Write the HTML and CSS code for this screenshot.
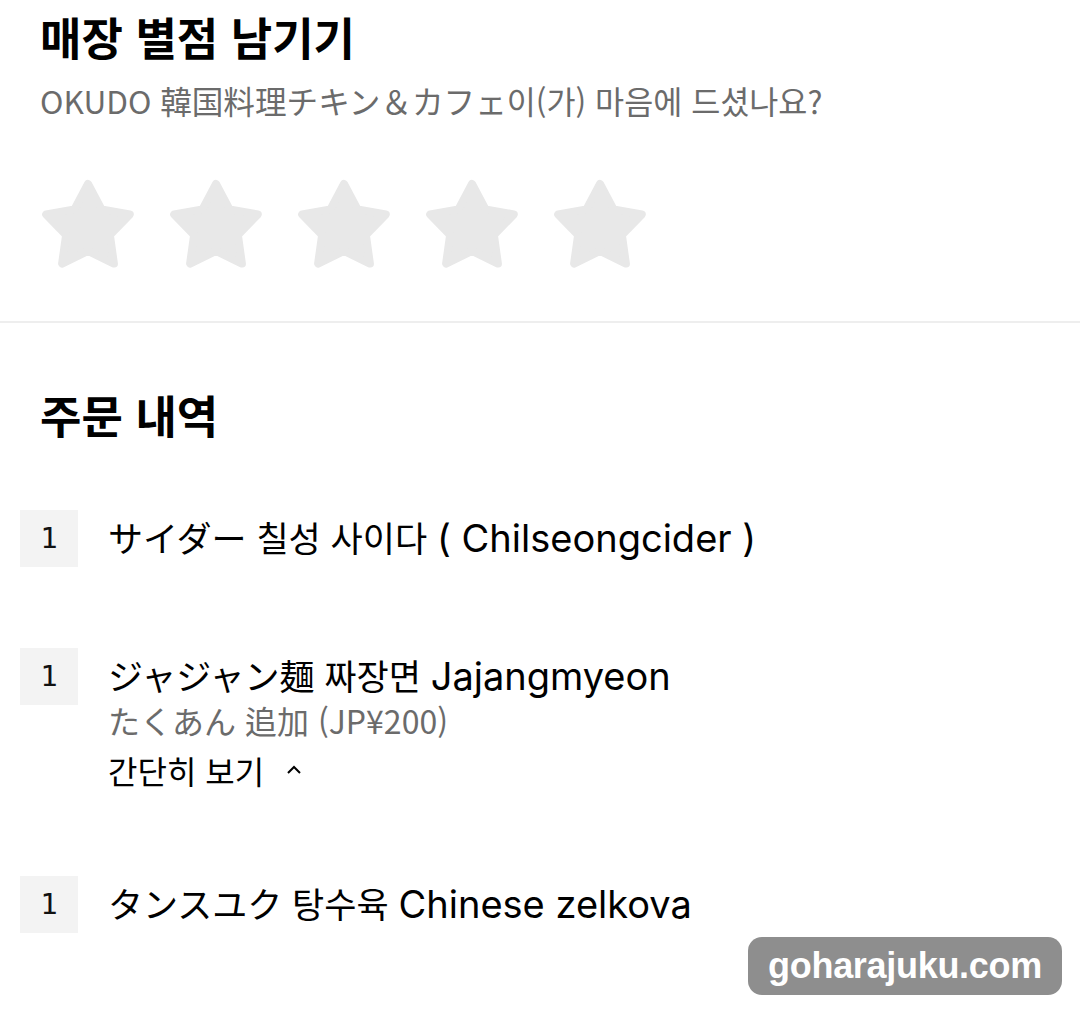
FILE: index.html
```html
<!DOCTYPE html>
<html lang="ko">
<head>
<meta charset="utf-8">
<link rel="stylesheet" href="styles.css">
</head>
<body>
<section class="rate">
  <h1 class="title">매장 별점 남기기</h1>
  <p class="sub">OKUDO 韓国料理チキン＆カフェ이(가) 마음에 드셨나요?</p>
  <div class="stars">
    <svg class="star" viewBox="0 0 100 96"><polygon points="50,6 63.5,31.4 91.8,36.4 71.9,57.1 75.9,85.6 50,73 24.1,85.6 28.1,57.1 8.2,36.4 36.5,31.4"/></svg>
    <svg class="star" viewBox="0 0 100 96"><polygon points="50,6 63.5,31.4 91.8,36.4 71.9,57.1 75.9,85.6 50,73 24.1,85.6 28.1,57.1 8.2,36.4 36.5,31.4"/></svg>
    <svg class="star" viewBox="0 0 100 96"><polygon points="50,6 63.5,31.4 91.8,36.4 71.9,57.1 75.9,85.6 50,73 24.1,85.6 28.1,57.1 8.2,36.4 36.5,31.4"/></svg>
    <svg class="star" viewBox="0 0 100 96"><polygon points="50,6 63.5,31.4 91.8,36.4 71.9,57.1 75.9,85.6 50,73 24.1,85.6 28.1,57.1 8.2,36.4 36.5,31.4"/></svg>
    <svg class="star" viewBox="0 0 100 96"><polygon points="50,6 63.5,31.4 91.8,36.4 71.9,57.1 75.9,85.6 50,73 24.1,85.6 28.1,57.1 8.2,36.4 36.5,31.4"/></svg>
  </div>
</section>
<section class="orders">
  <h2 class="title">주문 내역</h2>
  <div class="list">
    <div class="item">
      <div class="qty">1</div>
      <div class="info">
        <div class="name">サイダー 칠성 사이다 <span class="lat">( Chilseongcider )</span></div>
      </div>
    </div>
    <div class="item">
      <div class="qty">1</div>
      <div class="info">
        <div class="name">ジャジャン麺 짜장면 <span class="lat">Jajangmyeon</span></div>
        <div class="opt">たくあん 追加 (JP¥200)</div>
        <div class="toggle">간단히 보기 <svg class="chev" viewBox="0 0 16 10"><polyline points="2,8 8,2 14,8"/></svg></div>
      </div>
    </div>
    <div class="item">
      <div class="qty">1</div>
      <div class="info">
        <div class="name">タンスユク 탕수육 <span class="lat">Chinese zelkova</span></div>
      </div>
    </div>
  </div>
</section>
<div class="watermark">goharajuku.com</div>
</body>
</html>
```

FILE: styles.css
```css
html, body {
  margin: 0;
  padding: 0;
  background: #fff;
}
body {
  width: 1080px;
  height: 1018px;
  overflow: hidden;
  position: relative;
  font-family: "Noto Sans CJK KR", "Noto Sans CJK JP", sans-serif;
  color: #111;
}
.rate {
  padding: 7px 40px 0;
  height: 314px;
  box-sizing: content-box;
  border-bottom: 2px solid #eeeeee;
}
.title {
  margin: 0;
  font-family: "Noto Sans CJK KR", sans-serif;
  font-weight: 700;
  font-size: 45px;
  line-height: 60px;
  color: #000;
}
.sub {
  margin: 13px 0 0;
  font-size: 31.6px;
  line-height: 40px;
  color: #6b6b6b;
}
.stars {
  display: flex;
  gap: 28px;
  margin-top: 58px;
  margin-left: -2px;
}
.star {
  width: 100px;
  height: 96px;
}
.star polygon {
  fill: #e8e8e8;
  stroke: #e8e8e8;
  stroke-width: 8;
  stroke-linejoin: round;
}
.orders {
  padding: 62px 0 0;
}
.orders .title {
  padding-left: 40px;
  margin-bottom: 65px;
}
.list {
  display: flex;
  flex-direction: column;
  gap: 81px;
}
.item {
  display: flex;
  gap: 30px;
  padding-left: 20px;
}
.qty {
  width: 58px;
  height: 57px;
  background: #f3f3f3;
  font-family: "DejaVu Sans Mono", monospace;
  font-size: 29px;
  line-height: 57px;
  text-align: center;
  color: #111;
  flex: none;
}
.info {
  padding-top: 4px;
}
.name {
  font-size: 35px;
  line-height: 46px;
  color: #000;
  white-space: nowrap;
}
.lat {
  font-family: Inter, "Noto Sans CJK KR", sans-serif;
  font-size: 38px;
  line-height: 1;
}
.opt {
  font-size: 32px;
  line-height: 44px;
  color: #6b6b6b;
}
.toggle {
  margin-top: 8px;
  margin-bottom: 5px;
  font-size: 32px;
  line-height: 40px;
  color: #000;
  display: flex;
  align-items: center;
  gap: 22px;
}
.chev {
  width: 16px;
  height: 10px;
}
.chev polyline {
  fill: none;
  stroke: #000;
  stroke-width: 2;
}
.watermark {
  position: absolute;
  left: 748px;
  top: 937px;
  width: 314px;
  height: 58px;
  border-radius: 14px;
  background: #8e8e8e;
  color: #fff;
  font-family: "Liberation Sans", Arial, sans-serif;
  font-weight: 700;
  font-size: 36px;
  line-height: 58px;
  text-align: center;
  letter-spacing: -0.3px;
}
```
